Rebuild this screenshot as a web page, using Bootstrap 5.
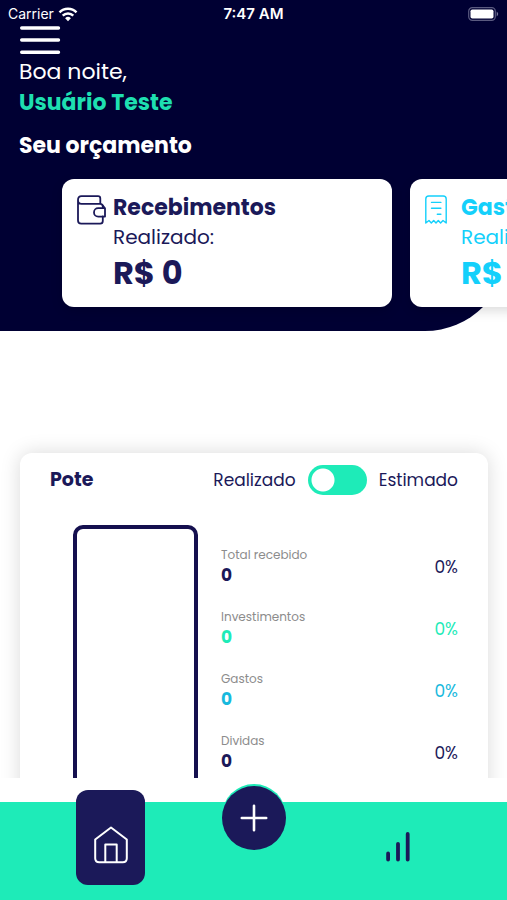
<!DOCTYPE html>
<html lang="pt-BR">
<head>
<meta charset="utf-8">
<meta name="viewport" content="width=device-width, initial-scale=1">
<title>Seu orçamento</title>
<link href="https://cdn.jsdelivr.net/npm/bootstrap@5.3.0/dist/css/bootstrap.min.css" rel="stylesheet">
<style>
:root { --night: #000033; --navy: #1b1959; --mint: #1eebb8; --sky: #14d0fb; }
body { font-family: Poppins, Inter, "Open Sans", sans-serif; color: var(--navy); background: #fff; }
.hero { background: var(--night); color: #fff; border-bottom-right-radius: 82px; }
.status { height: 26px; font: 14px/28px Inter, sans-serif; padding: 2px 8px 0 8px; }
.status > * { flex: 1 1 0; }
.clock { font-size: 15px; }
.page-pad { padding: 0 19px; }
.menu-btn { line-height: 0; }
.greeting { font-size: 22px; line-height: 31px; }
.user-name { font-size: 22px; line-height: 31px; color: #1edfb0; }
.section-title { font-size: 22px; line-height: 32px; margin-top: 12px; }
.scroller { scrollbar-width: none; }
.scroller::-webkit-scrollbar { display: none; }
.budget-list { gap: 18px; padding: 17px 20px 24px 62px; }
.budget { flex: 0 0 330px; height: 128px; border-radius: 12px; background: #fff; padding: 14px 15px; gap: 7px; color: var(--navy); box-shadow: 0 4px 12px rgba(0,0,0,.14); }
.budget svg { flex: none; margin-top: 2px; }
.budget-sky { color: var(--sky); }
.budget-name { font-size: 22px; line-height: 30px; }
.budget-kind { font-size: 20px; line-height: 29px; }
.budget-value { font-size: 32px; line-height: 42px; }
.pot-area { min-height: 0; padding: 122px 19px 0 20px; }
.pot { border-radius: 12px; background: #fff; padding: 12px 30px 32px; box-shadow: 0 0 20px rgba(0,0,0,.15); }
.pot-title { font-size: 19px; line-height: 30px; }
.pot-switch { font-size: 17px; line-height: 30px; gap: 12px; }
.toggle { appearance: none; width: 59px; height: 30px; margin: 0; border-radius: 15px; background: radial-gradient(circle at 15px 15px, #fff 11px, transparent 12px) var(--mint); }
.toggle:checked { background: radial-gradient(circle at 44px 15px, #fff 11px, transparent 12px) var(--mint); }
.pot-body { margin-top: 30px; gap: 23px; padding-left: 23px; }
.jar { flex: 0 0 125px; height: 330px; border: 4px solid #15104f; border-radius: 10px; }
.pot-rows { padding-top: 21px; }
.pot-row { height: 62px; }
.pot-label { font-size: 12px; line-height: 18px; color: #8c8c8c; }
.pot-value { font-size: 17px; line-height: 23px; }
.pot-pct { font-size: 17px; line-height: 24px; margin-top: 9px; }
.c-mint { color: var(--mint); }
.c-cyan { color: #18b9dd; }
.tabs { height: 122px; padding: 0 37px 0 39px; background: linear-gradient(#fff 24px, var(--mint) 24px); }
.tab-home { width: 69px; height: 95px; margin-top: 12px; padding-top: 15px; border-radius: 12px; background: var(--navy); color: #fff; }
.tab-add { width: 64px; height: 64px; margin-top: 8px; border-radius: 50%; background: var(--navy); color: #fff; box-shadow: 0 -2px 0 var(--mint); }
.tab-chart { margin-top: 52px; color: var(--navy); line-height: 0; }
</style>
</head>
<body>
<div class="d-flex flex-column vh-100 overflow-hidden">
  <header class="hero flex-shrink-0">
    <div class="status d-flex align-items-center">
      <div class="d-flex align-items-center gap-1"><span>Carrier</span>
        <svg width="20" height="15" viewBox="0 0 20 15" fill="none" stroke="#fff" stroke-width="2.5" aria-hidden="true"><path d="M1.5 5.3a12 12 0 0 1 17 0M4.7 8.6a7.5 7.5 0 0 1 10.6 0"/><path d="M10 14.2l-2.900-3a4.100 4.100 0 0 1 5.800 0z" fill="#fff" stroke="none"/></svg>
      </div>
      <div class="clock text-center fw-semibold">7:47 AM</div>
      <div class="d-flex justify-content-end">
        <svg width="31" height="14" viewBox="0 0 31 14" aria-hidden="true"><rect x=".7" y=".7" width="26.6" height="12.6" rx="3.6" fill="none" stroke="#5a5a80" stroke-width="1.2"/><rect x="2.500" y="2.500" width="23" height="9" rx="1.8" fill="#fff"/><path d="M28.700 4.500q3 2.500 0 5z" fill="#77779a"/></svg>
      </div>
    </div>
    <div class="page-pad">
      <button type="button" class="menu-btn btn p-0 border-0 d-block" aria-label="Menu">
        <svg width="42" height="30" viewBox="0 0 42 30" stroke="#fff" stroke-width="3.4" stroke-linecap="round"><path d="M2.700 2h36.800M2.700 14h36.800M2.700 26.300h36.800"/></svg>
      </button>
      <div class="greeting">Boa noite,</div>
      <div class="user-name fw-bold">Usuário Teste</div>
      <h1 class="section-title fw-bold mb-0">Seu orçamento</h1>
    </div>
    <div class="budget-list scroller d-flex overflow-auto">
      <section class="budget d-flex">
        <svg width="29" height="30" viewBox="0 0 29 30" fill="none" stroke="currentColor" stroke-width="1.8" stroke-linejoin="round" stroke-linecap="round" aria-hidden="true"><path d="M1 5v20.500q0 3.200 3.200 3.200h19q2.600 0 2.600-2.600v-4.600M25.800 13V11.500q0-2.600-2.600-2.600H4.500Q1 8.900 1 5t3.500-3.900H21q2.300 0 2.300 2.300v5.400"/><path d="M25.800 10.500l2.200 2.700v8.400h-6.800a4.200 4.200 0 0 1 0-8.400H28"/></svg>
        <div>
          <h2 class="budget-name fw-bold mb-0">Recebimentos</h2>
          <div class="budget-kind">Realizado:</div>
          <div class="budget-value fw-bold">R$ 0</div>
        </div>
      </section>
      <section class="budget budget-sky d-flex">
        <svg width="29" height="30" viewBox="0 0 29 30" fill="none" stroke="currentColor" stroke-width="1.400" stroke-linejoin="round" stroke-linecap="round" aria-hidden="true"><path d="M.8 28V4Q.8 1 3.800 1h14.400q3 0 3 3v24l-3.200-2.500-2.400 2.500-2.300-2.500-2.300 2.500-2.300-2.500-2.400 2.500L4 25.500z"/><path d="M6.500 7.400h9.400M6.500 13.300h9.400M12.300 19.300h3.600"/></svg>
        <div>
          <h2 class="budget-name fw-bold mb-0">Gastos</h2>
          <div class="budget-kind">Realizado:</div>
          <div class="budget-value fw-bold">R$ 0</div>
        </div>
      </section>
    </div>
  </header>

  <main class="pot-area scroller flex-grow-1 overflow-auto">
    <section class="pot">
      <div class="d-flex justify-content-between align-items-center">
        <h2 class="pot-title fw-bold mb-0">Pote</h2>
        <div class="pot-switch d-flex align-items-center">
          <label for="mode">Realizado</label>
          <input class="toggle" type="checkbox" role="switch" id="mode">
          <label for="mode">Estimado</label>
        </div>
      </div>
      <div class="pot-body d-flex">
        <div class="jar"></div>
        <div class="pot-rows flex-grow-1">
          <div class="pot-row d-flex justify-content-between"><div><div class="pot-label">Total recebido</div><div class="pot-value fw-bold">0</div></div><div class="pot-pct">0%</div></div>
          <div class="pot-row d-flex justify-content-between c-mint"><div><div class="pot-label">Investimentos</div><div class="pot-value fw-bold">0</div></div><div class="pot-pct">0%</div></div>
          <div class="pot-row d-flex justify-content-between c-cyan"><div><div class="pot-label">Gastos</div><div class="pot-value fw-bold">0</div></div><div class="pot-pct">0%</div></div>
          <div class="pot-row d-flex justify-content-between"><div><div class="pot-label">Dividas</div><div class="pot-value fw-bold">0</div></div><div class="pot-pct">0%</div></div>
        </div>
      </div>
    </section>
  </main>

  <nav class="tabs row row-cols-3 g-0 flex-shrink-0" aria-label="Principal">
    <div class="col d-flex justify-content-center align-items-start">
      <a href="#" class="tab-home d-flex justify-content-center align-items-center" aria-label="Início">
        <svg width="34" height="38" viewBox="0 0 34 38" fill="none" stroke="currentColor" stroke-width="2" stroke-linejoin="round" stroke-linecap="round"><path d="M1.200 13.500L17 1.500l15.800 12v18.700q0 4-4 4H5.200q-4 0-4-4z"/><path d="M11.300 36V18.600h11.400V36"/></svg>
      </a>
    </div>
    <div class="col d-flex justify-content-center align-items-start">
      <button type="button" class="tab-add border-0 p-0 d-flex justify-content-center align-items-center" aria-label="Adicionar">
        <svg width="28" height="28" viewBox="0 0 28 28" stroke="currentColor" stroke-width="2.600" stroke-linecap="round"><path d="M14 1.800v24.400M1.800 14h24.400"/></svg>
      </button>
    </div>
    <div class="col d-flex justify-content-center align-items-start">
      <a href="#" class="tab-chart" aria-label="Relatórios">
        <svg width="24" height="34" viewBox="0 0 24 34" stroke="currentColor" stroke-width="3.800" stroke-linecap="round"><path d="M2.100 23.500v6M12 13.800v15.700M21.700 4v25.500"/></svg>
      </a>
    </div>
  </nav>
</div>
<script src="https://cdn.jsdelivr.net/npm/bootstrap@5.3.0/dist/js/bootstrap.bundle.min.js"></script>
</body>
</html>
